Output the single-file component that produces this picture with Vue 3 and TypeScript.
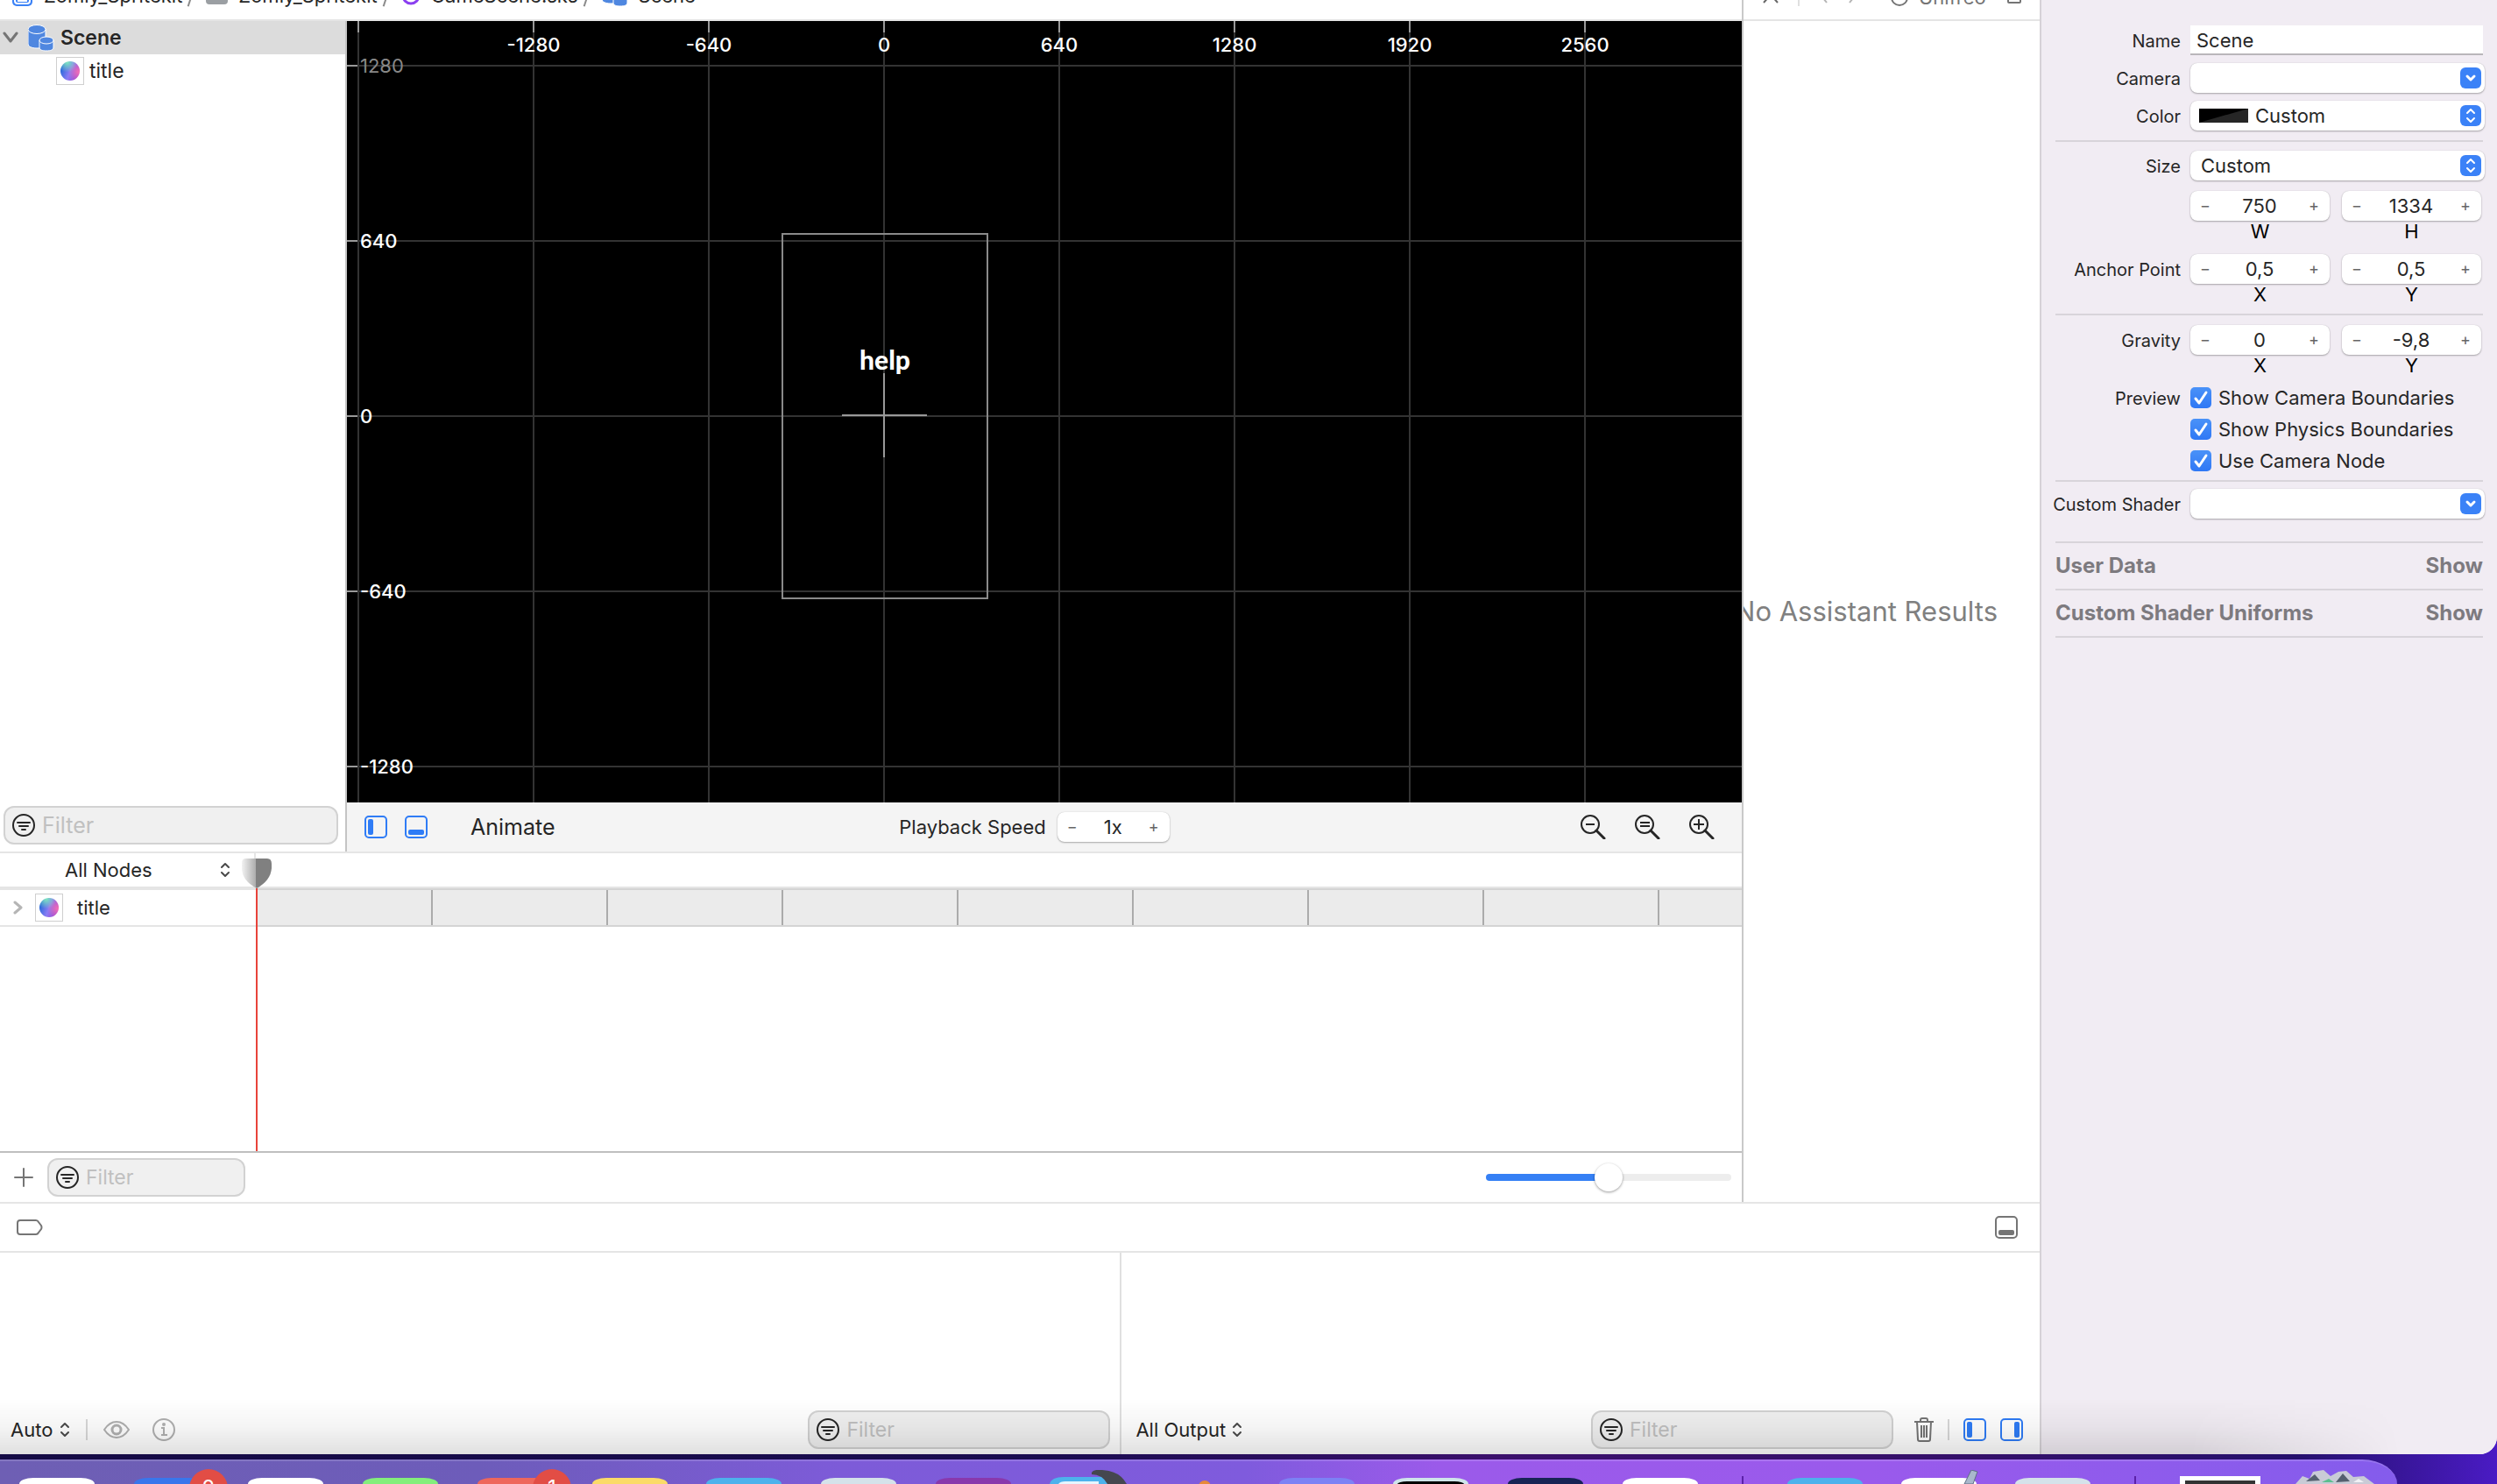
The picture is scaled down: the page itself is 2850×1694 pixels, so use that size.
<script setup lang="ts">
import { computed, ref } from 'vue'

interface Mark {
  label: string
  at: number
}

const columns: Mark[] = [
  { label: '', at: 13 },
  { label: '-1280', at: 213 },
  { label: '-640', at: 413 },
  { label: '0', at: 613 },
  { label: '640', at: 813 },
  { label: '1280', at: 1013 },
  { label: '1920', at: 1213 },
  { label: '2560', at: 1413 },
]

const rows: Mark[] = [
  { label: '1280', at: 51 },
  { label: '640', at: 251 },
  { label: '0', at: 451 },
  { label: '-640', at: 651 },
  { label: '-1280', at: 851 },
]

const previews = ref([
  { id: 'camera-bounds', label: 'Show Camera Boundaries', on: true },
  { id: 'physics-bounds', label: 'Show Physics Boundaries', on: true },
  { id: 'camera-node', label: 'Use Camera Node', on: true },
])

const sections = ['User Data', 'Custom Shader Uniforms']

const name = ref('Scene')
const width = ref('750')
const height = ref('1334')
const anchorX = ref('0,5')
const anchorY = ref('0,5')
const gravityX = ref('0')
const gravityY = ref('-9,8')
const speed = ref('1x')
const scale = ref(50)
const scaleFill = computed(() => ({ '--fill': `${scale.value}%` }))

const apps = ['white', 'blue badge', 'white', 'green', 'red badge', 'yellow', 'sky', 'mist', 'plum', 'watch', 'dot', 'iris', 'screen', 'navy', 'white']
</script>

<template>
  <div class="desktop">
    <div class="window">
      <div class="main">
        <div class="upper">
          <div class="editor">
            <nav class="path" aria-label="Path">
              <svg class="crumb-icon" width="25" height="24" viewBox="0 0 25 24"><rect x="1" y="1" width="23" height="22" rx="5" fill="#3b82f6" /><rect x="4" y="4" width="17" height="16" rx="3" fill="none" stroke="#fff" stroke-width="2" /><path d="M7 17h11" stroke="#fff" stroke-width="2" /></svg>
              <a href="#" class="crumb">Zomly_Spritekit</a>
              <span class="slash"></span>
              <svg class="crumb-icon folder" width="25" height="24" viewBox="0 0 25 24"><path d="M0 4h25v13q0 4-4 4H4q-4 0-4-4z" fill="#9b9fa3" /></svg>
              <a href="#" class="crumb">Zomly_Spritekit</a>
              <span class="slash"></span>
              <svg class="crumb-icon ring" width="22" height="24" viewBox="0 0 22 24"><circle cx="11" cy="11" r="9" fill="none" stroke="#8b3ff0" stroke-width="3" /></svg>
              <a href="#" class="crumb">GameScene.sks</a>
              <span class="slash"></span>
              <svg class="crumb-icon" width="30" height="31" viewBox="0 0 30 31"><use href="#cylinders" /></svg>
              <a href="#" class="crumb">Scene</a>
            </nav>
            <div class="stage">
              <aside class="outline">
                <div class="node scene-node">
                  <svg width="18" height="14" viewBox="0 0 18 14"><path d="M2 2l7 9 7-9" fill="none" stroke="#757575" stroke-width="3" stroke-linecap="round" stroke-linejoin="round" /></svg>
                  <svg width="30" height="31" viewBox="0 0 30 31">
                    <g id="cylinders" fill="#4f87e0" stroke="#fff" stroke-width="1">
                      <path d="M0 5v17c0 3 4 5 10 5s10-2 10-5V5z" /><ellipse cx="10" cy="5.500" rx="10" ry="5" />
                      <path d="M13 18v8c0 3 3 4 8 4s8-1 8-4v-8z" /><ellipse cx="21" cy="18" rx="8" ry="4" />
                    </g>
                  </svg>
                  <span class="node-name strong">Scene</span>
                </div>
                <div class="node title-node">
                  <span class="thumb"><span class="orb"></span></span>
                  <span class="node-name">title</span>
                </div>
                <label class="filter outline-filter">
                  <svg class="filter-icon" width="26" height="26" viewBox="0 0 26 26"><g id="lines" fill="none" stroke="#262626" stroke-width="2"><circle cx="13" cy="13" r="12" /><path d="M6 10h14M8 14h10M11 18h4" stroke-linecap="round" /></g></svg>
                  <input type="text" placeholder="Filter" aria-label="Filter nodes" />
                </label>
              </aside>
              <section class="view">
                <div class="canvas">
                  <svg class="grid" width="100%" height="100%">
                    <g stroke="#333" stroke-width="2">
                      <line v-for="c in columns" :key="c.at" :x1="c.at" :x2="c.at" y1="0" y2="100%" />
                      <line v-for="r in rows" :key="r.at" :y1="r.at" :y2="r.at" x1="0" x2="100%" />
                    </g>
                    <g stroke="#999" stroke-width="2">
                      <line v-for="c in columns" :key="c.at" :x1="c.at" :x2="c.at" y1="0" y2="13" />
                      <line v-for="r in rows" :key="r.at" :y1="r.at" :y2="r.at" x1="0" x2="12" />
                    </g>
                    <g fill="none" stroke="#8a8a8a" stroke-width="2">
                      <rect x="497" y="243" width="234" height="416" />
                      <path d="M565 450h97M613 402v96" stroke="#999" />
                    </g>
                    <g class="marks">
                      <text v-for="c in columns" :key="c.at" :x="c.at" y="35" text-anchor="middle">{{ c.label }}</text>
                      <text v-for="(r, i) in rows" :key="r.at" x="15" :y="r.at + 8" :class="{ dim: i === 0 }">{{ r.label }}</text>
                    </g>
                    <text class="help" x="614" y="398" text-anchor="middle">help</text>
                  </svg>
                </div>
                <div class="toolbar">
                  <div class="tools">
                    <button aria-label="Toggle outline"><svg width="26" height="26" viewBox="0 0 26 26"><rect x="1" y="1" width="24" height="24" rx="4" fill="none" stroke="#2f7cf6" stroke-width="2" /><rect x="4" y="4" width="6" height="18" rx="2" fill="#2f7cf6" /></svg></button>
                    <button aria-label="Toggle timeline"><svg width="26" height="26" viewBox="0 0 26 26"><rect x="1" y="1" width="24" height="24" rx="4" fill="none" stroke="#2f7cf6" stroke-width="2" /><rect x="4" y="16" width="18" height="6" rx="2" fill="#2f7cf6" /></svg></button>
                    <button class="animate">Animate</button>
                  </div>
                  <div class="playback">
                    <label for="speed">Playback Speed</label>
                    <div class="stepper speed"><button aria-label="Slower">−</button><input id="speed" v-model="speed" type="text" /><button aria-label="Faster">+</button></div>
                  </div>
                  <div class="zooms">
                    <button aria-label="Zoom out"><svg width="29" height="28" viewBox="0 0 29 28"><g fill="none" stroke="#262626" stroke-width="2"><circle cx="11" cy="11" r="10" /><path d="M6 11h10" /><path d="M18 18l9 9" stroke-width="3" stroke-linecap="round" /></g></svg></button>
                    <button aria-label="Actual size"><svg width="29" height="28" viewBox="0 0 29 28"><g fill="none" stroke="#262626" stroke-width="2"><circle cx="11" cy="11" r="10" /><path d="M6 9h11M6 13h11" /><path d="M18 18l9 9" stroke-width="3" stroke-linecap="round" /></g></svg></button>
                    <button aria-label="Zoom in"><svg width="29" height="28" viewBox="0 0 29 28"><g fill="none" stroke="#262626" stroke-width="2"><circle cx="11" cy="11" r="10" /><path d="M5 11h12M11 5v12" /><path d="M18 18l9 9" stroke-width="3" stroke-linecap="round" /></g></svg></button>
                  </div>
                </div>
              </section>
            </div>
            <section class="timeline">
              <div class="timeline-head">
                <div class="pick nodes">
                  <select aria-label="Nodes"><option>All Nodes</option></select>
                  <svg width="12" height="18" viewBox="0 0 12 18"><path id="updown" d="M2 6l4-4 4 4M2 12l4 4 4-4" fill="none" stroke="#4a4a4a" stroke-width="2" stroke-linecap="round" stroke-linejoin="round" /></svg>
                </div>
              </div>
              <div class="track-row">
                <div class="track-name">
                  <svg width="11" height="16" viewBox="0 0 11 16"><path d="M2 2l7 6-7 6" fill="none" stroke="#b5b5b5" stroke-width="3" stroke-linecap="round" stroke-linejoin="round" /></svg>
                  <span class="thumb"><span class="orb"></span></span>
                  <span>title</span>
                </div>
                <div class="track"></div>
              </div>
              <div class="playhead">
                <svg width="34" height="34" viewBox="0 0 34 34"><defs><linearGradient id="fade"><stop offset="0" stop-color="#f2f2f2" /><stop offset="1" stop-color="#a8a8a8" /></linearGradient></defs><path d="M17 0H5Q0 0 0 5v6q0 14 17 23z" fill="url(#fade)" /><path d="M16 0h13q5 0 5 6v5q-1 14-17 23l-1-1z" fill="#808080" /></svg>
              </div>
            </section>
            <div class="timeline-foot">
              <button aria-label="Add"><svg width="22" height="22" viewBox="0 0 22 22"><path d="M11 1v20M1 11h20" stroke="#757575" stroke-width="2" stroke-linecap="round" /></svg></button>
              <label class="filter small">
                <svg class="filter-icon" width="26" height="26" viewBox="0 0 26 26"><use href="#lines" /></svg>
                <input type="text" placeholder="Filter" aria-label="Filter timeline" />
              </label>
              <input v-model.number="scale" class="scale" type="range" min="0" max="100" aria-label="Timeline scale" :style="scaleFill" />
            </div>
          </div>
          <section class="assistant">
            <div class="assistant-bar">
              <svg width="18" height="20" viewBox="0 0 18 20"><path d="M1 1l16 18M17 1L1 19" stroke="#666" stroke-width="2" /></svg>
              <span class="bar-rule"></span>
              <svg class="chev" width="10" height="22" viewBox="0 0 10 22"><path d="M9 1L1 11l8 10" fill="none" stroke="#b5b5b5" stroke-width="2" /></svg>
              <svg class="chev" width="10" height="22" viewBox="0 0 10 22"><path d="M1 1l8 10-8 10" fill="none" stroke="#b5b5b5" stroke-width="2" /></svg>
              <svg class="dial" width="20" height="22" viewBox="0 0 20 22"><circle cx="10" cy="11" r="9" fill="none" stroke="#757575" stroke-width="2" /></svg>
              <span class="callers">Unifreo</span>
              <svg width="16" height="22" viewBox="0 0 16 22"><rect x="1" y="1" width="14" height="20" rx="1" fill="none" stroke="#757575" stroke-width="2" /></svg>
            </div>
            <p class="empty">No Assistant Results</p>
          </section>
        </div>
        <div class="debug-bar">
          <button aria-label="Breakpoints"><svg width="30" height="18" viewBox="0 0 30 18"><path d="M4 1h18q2 0 3 2l3 4q1 2 0 4l-3 4q-1 2-3 2H4q-3 0-3-3V4q0-3 3-3z" fill="none" stroke="#757575" stroke-width="2" /></svg></button>
          <button aria-label="Toggle debug area"><svg width="26" height="26" viewBox="0 0 26 26"><rect x="1" y="1" width="24" height="24" rx="4" fill="none" stroke="#757575" stroke-width="2" /><rect x="4" y="16" width="18" height="6" rx="2" fill="#757575" /></svg></button>
        </div>
        <div class="debug">
          <section class="variables">
            <div class="pick"><select aria-label="Scope"><option>Auto</option></select><svg width="12" height="18" viewBox="0 0 12 18"><use href="#updown" /></svg></div>
            <span class="rule"></span>
            <button class="eye" aria-label="Quick look"><svg width="30" height="20" viewBox="0 0 30 20"><path d="M1 10Q7 1 15 1t14 9q-6 9-14 9T1 10z" fill="none" stroke="#b0b0b0" stroke-width="2" /><circle cx="15" cy="10" r="5" fill="none" stroke="#b0b0b0" stroke-width="3" /></svg></button>
            <button aria-label="Info"><svg width="26" height="26" viewBox="0 0 26 26"><circle cx="13" cy="13" r="12" fill="none" stroke="#b0b0b0" stroke-width="2" /><circle cx="13" cy="7" r="2" fill="#b0b0b0" /><path d="M10 11h3v8M10 19h7" fill="none" stroke="#b0b0b0" stroke-width="2" /></svg></button>
            <label class="filter small wide">
              <svg class="filter-icon" width="26" height="26" viewBox="0 0 26 26"><use href="#lines" /></svg>
              <input type="text" placeholder="Filter" aria-label="Filter variables" />
            </label>
          </section>
          <section class="console">
            <div class="pick"><select aria-label="Output"><option>All Output</option></select><svg width="12" height="18" viewBox="0 0 12 18"><use href="#updown" /></svg></div>
            <label class="filter small wide">
              <svg class="filter-icon" width="26" height="26" viewBox="0 0 26 26"><use href="#lines" /></svg>
              <input type="text" placeholder="Filter" aria-label="Filter output" />
            </label>
            <button class="trash" aria-label="Clear"><svg width="22" height="28" viewBox="0 0 22 28"><g fill="none" stroke="#757575" stroke-width="2"><path d="M0 5h22M7 5V3q0-2 2-2h4q2 0 2 2v2M3 5l1 20q0 2 2 2h10q2 0 2-2l1-20M8 9v14M11 9v14M14 9v14" /></g></svg></button>
            <span class="rule"></span>
            <button class="pane" aria-label="Show variables"><svg width="26" height="26" viewBox="0 0 26 26"><rect x="1" y="1" width="24" height="24" rx="4" fill="none" stroke="#2f7cf6" stroke-width="2" /><rect x="4" y="4" width="6" height="18" rx="2" fill="#2f7cf6" /></svg></button>
            <button aria-label="Show console"><svg width="26" height="26" viewBox="0 0 26 26"><rect x="1" y="1" width="24" height="24" rx="4" fill="none" stroke="#2f7cf6" stroke-width="2" /><rect x="16" y="4" width="6" height="18" rx="2" fill="#2f7cf6" /></svg></button>
          </section>
        </div>
      </div>

      <aside class="inspector">
        <div class="field">
          <label for="name">Name</label>
          <input id="name" v-model="name" class="text" type="text" />
        </div>
        <div class="field">
          <label for="camera">Camera</label>
          <div class="popup">
            <select id="camera"><option></option></select>
            <svg class="knob" width="24" height="24" viewBox="0 0 24 24"><g id="down"><rect width="24" height="24" rx="6" fill="#3b82f7" /><path d="M8 10l4 4 4-4" fill="none" stroke="#fff" stroke-width="3" stroke-linecap="round" stroke-linejoin="round" /></g></svg>
          </div>
        </div>
        <div class="field">
          <label for="color">Color</label>
          <div class="popup swatched">
            <svg class="swatch" width="56" height="16" viewBox="0 0 56 16"><rect width="56" height="16" /><path d="M56 0v16H0z" fill="#262626" /></svg>
            <select id="color"><option>Custom</option></select>
            <svg class="knob" width="24" height="24" viewBox="0 0 24 24"><g id="both"><rect width="24" height="24" rx="6" fill="#3b82f7" /><path d="M8 9l4-4 4 4M8 15l4 4 4-4" fill="none" stroke="#fff" stroke-width="2" stroke-linecap="round" stroke-linejoin="round" /></g></svg>
          </div>
        </div>
        <hr class="after-color" />
        <div class="field size">
          <label for="size">Size</label>
          <div class="popup">
            <select id="size"><option>Custom</option></select>
            <svg class="knob" width="24" height="24" viewBox="0 0 24 24"><use href="#both" /></svg>
          </div>
        </div>
        <div class="field dims">
          <span></span>
          <div class="pair">
            <div class="stepper"><button aria-label="Less width">−</button><input id="w" v-model="width" type="text" /><button aria-label="More width">+</button></div>
            <div class="stepper"><button aria-label="Less height">−</button><input id="h" v-model="height" type="text" /><button aria-label="More height">+</button></div>
            <label for="w">W</label><label for="h">H</label>
          </div>
        </div>
        <div class="field anchor">
          <span class="caption">Anchor Point</span>
          <div class="pair">
            <div class="stepper"><button aria-label="Less anchor X">−</button><input id="ax" v-model="anchorX" type="text" /><button aria-label="More anchor X">+</button></div>
            <div class="stepper"><button aria-label="Less anchor Y">−</button><input id="ay" v-model="anchorY" type="text" /><button aria-label="More anchor Y">+</button></div>
            <label for="ax">X</label><label for="ay">Y</label>
          </div>
        </div>
        <hr class="after-anchor" />
        <div class="field gravity">
          <span class="caption">Gravity</span>
          <div class="pair">
            <div class="stepper"><button aria-label="Less gravity X">−</button><input id="gx" v-model="gravityX" type="text" /><button aria-label="More gravity X">+</button></div>
            <div class="stepper"><button aria-label="Less gravity Y">−</button><input id="gy" v-model="gravityY" type="text" /><button aria-label="More gravity Y">+</button></div>
            <label for="gx">X</label><label for="gy">Y</label>
          </div>
        </div>
        <div class="field preview">
          <span class="caption">Preview</span>
          <div class="checks">
            <div v-for="p in previews" :key="p.id" class="check">
              <span class="box">
                <input :id="p.id" v-model="p.on" type="checkbox" />
                <svg v-if="p.on" width="24" height="24" viewBox="0 0 24 24"><path d="M6 13l4 5 8-12" fill="none" stroke="#fff" stroke-width="3" stroke-linecap="round" stroke-linejoin="round" /></svg>
              </span>
              <label :for="p.id">{{ p.label }}</label>
            </div>
          </div>
        </div>
        <hr class="after-preview" />
        <div class="field shader">
          <label for="shader">Custom Shader</label>
          <div class="popup">
            <select id="shader"><option></option></select>
            <svg class="knob" width="24" height="24" viewBox="0 0 24 24"><use href="#down" /></svg>
          </div>
        </div>
        <div class="sections">
          <div v-for="s in sections" :key="s" class="section"><span>{{ s }}</span><button>Show</button></div>
        </div>
      </aside>
      <div class="shade"></div>
    </div>

    <footer class="dock">
      <div class="apps">
        <span v-for="(a, i) in apps" :key="i" class="app" :class="a">
          <span v-if="a === 'blue badge'" class="count">2</span>
          <span v-if="a === 'red badge'" class="count">1</span>
          <svg v-if="a === 'watch'" width="90" height="16" viewBox="0 0 90 16"><path d="M0 16Q2 8 16 8h44q12 0 14 8z" fill="#4db2ec" /><path d="M10 16q2-3 8-3h38v3z" fill="#e6f6ff" /><path d="M48 3q2-4 12-3 20 1 28 16H66Q60 5 48 5z" fill="#45474f" /></svg>
          <svg v-if="a === 'dot'" width="86" height="8" viewBox="0 0 86 8"><circle cx="46" cy="11" r="7" fill="#e88a3a" /></svg>
        </span>
      </div>
      <span class="dock-rule"></span>
      <div class="apps recent">
        <span class="app sky"></span>
        <span class="app white"><svg width="96" height="16" viewBox="0 0 96 16"><path d="M72 16l8-16 7 2-5 14z" fill="#a9b8cc" stroke="#5d6d85" /></svg></span>
        <span class="app mist"></span>
      </div>
      <span class="dock-rule"></span>
      <span class="shot"></span>
      <svg class="trashcan" width="90" height="16" viewBox="0 0 90 16"><path d="M0 16l8-9 8 3 4-8 12-2 8 7 9-5 9-1 8 7 12-1 12 9z" fill="#c9cbd6" /><path d="M12 13l10-8 6 7zM46 14l8-10 8 9z" fill="#55606f" /><path d="M30 14l8-4 6 4z" fill="#5bbf8f" /><path d="M66 14l6-4 6 4z" fill="#f1f1f5" /></svg>
    </footer>
  </div>
</template>

<style>
body {
  margin: 0;
}
</style>

<style scoped>
.desktop {
  display: flex;
  flex-direction: column;
  height: 100vh;
  overflow: hidden;
  background: linear-gradient(to right, #150b45 0, #1a0c50 42%, #3b106c 60%, #35106a 78%, #25106c 92%, #4a1bc4 100%);
  color: #262626;
  font: 22px/26px Inter, sans-serif;
}
button,
input,
select {
  margin: 0;
  padding: 0;
  border: 0;
  outline: 0;
  background: none;
  color: inherit;
  font: inherit;
  appearance: none;
}
button {
  display: flex;
  flex: none;
}
svg {
  flex: none;
  display: block;
}
.window {
  position: relative;
  flex: 1;
  min-height: 0;
  display: flex;
  background: #fff;
  border-bottom-right-radius: 20px;
  overflow: hidden;
}
.main {
  flex: 1;
  min-width: 0;
  display: flex;
  flex-direction: column;
}
.upper {
  flex: 1;
  min-height: 0;
  display: flex;
}
.editor {
  flex: 1;
  min-width: 0;
  display: flex;
  flex-direction: column;
}
.path,
.assistant-bar {
  display: flex;
  align-items: flex-end;
  height: 22px;
  flex: none;
  overflow: hidden;
  border-bottom: 2px solid #e5e5e5;
}
.path {
  padding-left: 13px;
}
.path > * {
  flex: none;
}
.crumb {
  margin: 0 5px 14px 12px;
  color: #262626;
  text-decoration: none;
}
.crumb-icon {
  margin-bottom: 14px;
}
.slash {
  width: 2px;
  height: 28px;
  margin: 0 15px 14px 5px;
  background: #8a8a8a;
  transform: rotate(18deg);
}
.stage {
  flex: 1;
  min-height: 0;
  display: flex;
  border-bottom: 2px solid #e5e5e5;
}
.outline {
  width: 394px;
  flex: none;
  display: flex;
  flex-direction: column;
  border-right: 2px solid #c4c4c4;
}
.node {
  display: flex;
  align-items: center;
  height: 38px;
  font-size: 23px;
}
.scene-node {
  gap: 7px;
  padding-left: 3px;
  background: #dcdcdc;
}
.scene-node svg + svg {
  margin-left: 4px;
}
.strong {
  font-weight: 600;
}
.title-node {
  gap: 6px;
  padding-left: 64px;
}
.thumb {
  display: flex;
  align-items: center;
  justify-content: center;
  box-sizing: border-box;
  width: 32px;
  height: 32px;
  border: 1px solid #cfcfcf;
  background: #fff;
}
.orb {
  width: 22px;
  height: 22px;
  border-radius: 50%;
  background: radial-gradient(circle at 35% 5%, #7fe8c0 0, rgba(127, 232, 192, 0) 45%), radial-gradient(circle at 95% 55%, #f26fb5 0, rgba(242, 111, 181, 0) 50%), linear-gradient(110deg, #2f6bdc 15%, #8a7cf4 50%, #a03fd0 90%);
}
.filter {
  display: flex;
  align-items: center;
  box-sizing: border-box;
  height: 44px;
  gap: 8px;
  padding: 0 8px;
  border: 2px solid #d2d2d2;
  border-radius: 12px;
  background: #f0f0f0;
  font-size: 25px;
}
.filter input {
  flex: 1;
  min-width: 0;
}
.filter input::placeholder {
  color: #c0c0c0;
  opacity: 1;
}
.small {
  font-size: 23px;
}
.outline-filter {
  margin: auto 8px 8px 4px;
}
.view {
  flex: 1;
  min-width: 0;
  display: flex;
  flex-direction: column;
}
.canvas {
  flex: 1;
  min-height: 0;
  overflow: hidden;
  background: #000;
}
.marks {
  fill: #fff;
  font-size: 22px;
  font-weight: 500;
}
.marks .dim {
  fill: #888;
  font-weight: 400;
}
.help {
  fill: #fff;
  font: 900 30px Lato, sans-serif;
}
.toolbar {
  display: grid;
  grid-template-columns: 1fr auto 1fr;
  align-items: center;
  height: 56px;
  padding: 0 31px 0 20px;
  background: #f4f4f4;
}
.tools {
  display: flex;
  align-items: center;
  gap: 20px;
}
.animate {
  margin-left: 29px;
  font-size: 25px;
}
.playback {
  display: flex;
  align-items: center;
  gap: 13px;
  margin-right: 12px;
}
.zooms {
  display: flex;
  justify-content: flex-end;
  gap: 33px;
}
.stepper {
  display: flex;
  align-items: center;
  box-sizing: border-box;
  height: 34px;
  padding: 0 11px 0 10px;
  border-radius: 8px;
  background: #fff;
  box-shadow: 0 1px 2px rgba(0, 0, 0, 0.3), 0 0 1px rgba(0, 0, 0, 0.2);
}
.stepper input {
  flex: 1;
  min-width: 0;
  width: 0;
  text-align: center;
}
.stepper button {
  width: 14px;
  justify-content: center;
  color: #666;
  font-size: 18px;
}
.speed {
  width: 128px;
}
.timeline {
  position: relative;
  height: 340px;
  flex: none;
  display: flex;
  flex-direction: column;
  border-bottom: 2px solid #bfbfbf;
}
.timeline-head {
  display: flex;
  height: 40px;
  box-sizing: border-box;
  border-bottom: 2px solid #e5e5e5;
}
.pick {
  display: flex;
  align-items: center;
  gap: 7px;
}
.nodes {
  width: 189px;
  padding: 0 27px 0 74px;
  justify-content: space-between;
  border-right: 2px solid #e5e5e5;
}
.track-row {
  display: flex;
  height: 44px;
}
.track-name {
  display: flex;
  align-items: center;
  box-sizing: border-box;
  width: 292px;
  padding-left: 15px;
  border: solid #e5e5e5;
  border-width: 2px 0;
}
.track-name .thumb {
  margin: 0 16px 0 14px;
}
.track {
  flex: 1;
  border: solid #d4d4d4;
  border-width: 2px 0;
  background: linear-gradient(to right, #ebebeb 198px, #ababab 198px) 2px 0 / 200px 100%;
}
.playhead {
  position: absolute;
  left: 292px;
  top: 40px;
  bottom: 0;
  width: 2px;
  background: #e8433a;
}
.playhead svg {
  position: absolute;
  left: -16px;
  bottom: 100%;
}
.timeline-foot {
  display: flex;
  align-items: center;
  height: 56px;
  flex: none;
  padding: 0 12px 0 16px;
}
.timeline-foot .filter {
  width: 226px;
  margin-left: 16px;
}
.scale {
  width: 280px;
  height: 34px;
  margin-left: auto;
}
.scale::-webkit-slider-runnable-track {
  height: 8px;
  border-radius: 4px;
  background: linear-gradient(to right, #3580f5 var(--fill), #ededed var(--fill));
}
.scale::-webkit-slider-thumb {
  appearance: none;
  width: 32px;
  height: 32px;
  margin-top: -12px;
  border-radius: 50%;
  background: #fff;
  box-shadow: 0 1px 3px rgba(0, 0, 0, 0.4);
}
.assistant {
  width: 338px;
  flex: none;
  display: flex;
  flex-direction: column;
  overflow: hidden;
  border-left: 2px solid #c9c9c9;
}
.assistant-bar {
  padding-left: 22px;
}
.assistant-bar > * {
  margin-bottom: 18px;
}
.bar-rule {
  width: 2px;
  height: 24px;
  margin: 0 22px 15px 22px;
  background: #e0e0e0;
}
.chev {
  margin-right: 24px;
}
.dial {
  margin: 0 12px 14px 14px;
}
.callers {
  margin-right: 24px;
  color: #757575;
}
.assistant-bar .callers {
  margin-bottom: 12px;
}
.empty {
  display: flex;
  flex: 1;
  align-items: center;
  justify-content: flex-end;
  margin: 0;
  padding: 0 48px 0 0;
  color: #808080;
  font-size: 31px;
  white-space: nowrap;
}
.debug-bar {
  display: flex;
  align-items: center;
  justify-content: space-between;
  height: 54px;
  flex: none;
  padding: 0 25px 0 19px;
  border: solid #e5e5e5;
  border-width: 2px 0;
}
.debug {
  display: flex;
  height: 230px;
  flex: none;
}
.variables,
.console {
  display: flex;
  align-items: center;
  box-sizing: border-box;
  height: 100%;
  padding-top: 174px;
}
.variables {
  width: 55%;
  padding-left: 12px;
  padding-right: 11px;
  border-right: 2px solid #e0e0e0;
}
.console {
  flex: 1;
  padding-left: 16px;
  padding-right: 19px;
}
.rule {
  width: 2px;
  height: 24px;
  margin: 0 18px;
  background: #d8d8d8;
}
.console .rule {
  margin: 0 16px;
}
.eye {
  margin-right: 26px;
}
.wide {
  width: 345px;
  margin-left: auto;
}
.trash {
  margin-left: 24px;
}
.pane {
  margin-right: 16px;
}
.inspector {
  width: 488px;
  flex: none;
  padding: 29px 16px 0;
  border-left: 2px solid #d6d2d7;
  background: #f1ecf3;
}
.field {
  display: grid;
  grid-template-columns: 143px minmax(0, 1fr);
  column-gap: 11px;
  margin-bottom: 9px;
}
.field > label,
.caption {
  display: flex;
  align-items: center;
  justify-content: flex-end;
  box-sizing: border-box;
  height: 34px;
  padding-top: 2px;
  font-size: 20px;
  white-space: nowrap;
}
.text {
  box-sizing: border-box;
  width: 100%;
  height: 34px;
  padding: 2px 7px 0;
  border-bottom: 2px solid #b9b6ba;
  background: #fff;
}
.popup {
  display: flex;
  align-items: center;
  height: 34px;
  margin-right: -2px;
  padding: 0 4px 0 12px;
  border-radius: 8px;
  background: #fff;
  box-shadow: 0 1px 2px rgba(0, 0, 0, 0.3), 0 0 1px rgba(0, 0, 0, 0.2);
}
.swatched {
  padding-left: 10px;
}
.popup select {
  flex: 1;
  min-width: 0;
}
.knob {
  pointer-events: none;
}
.swatch {
  margin-right: 8px;
}
.pair {
  display: grid;
  grid-template-columns: 1fr 1fr;
  column-gap: 14px;
  margin-right: 2px;
}
.pair label {
  height: 24px;
  color: #000;
  line-height: 24px;
  text-align: center;
}
hr {
  width: 100%;
  height: 2px;
  margin: 0;
  border: 0;
  background: #d8d4da;
}
.after-color {
  margin: 11px 0 10px;
}
.size {
  margin-bottom: 12px;
}
.dims {
  margin-bottom: 14px;
}
.anchor {
  margin-bottom: 10px;
}
.after-anchor {
  margin-bottom: 11px;
}
.gravity {
  margin-bottom: 13px;
}
.preview {
  margin-bottom: 10px;
}
.preview .caption {
  height: 24px;
}
.checks {
  display: flex;
  flex-direction: column;
  gap: 12px;
}
.check {
  display: flex;
  align-items: center;
  gap: 8px;
  height: 24px;
}
.box {
  display: grid;
}
.box > * {
  grid-area: 1 / 1;
  width: 24px;
  height: 24px;
}
.box input {
  border-radius: 5px;
  background: #fff;
}
.box input:checked {
  background: linear-gradient(#4a92f8, #2f78f5);
}
.box svg {
  pointer-events: none;
}
.after-preview {
  margin-bottom: 8px;
}
.shader {
  margin-bottom: 26px;
}
.sections {
  border-top: 2px solid #d8d4da;
}
.section {
  display: flex;
  align-items: center;
  justify-content: space-between;
  height: 52px;
  border-bottom: 2px solid #d8d4da;
  color: #7d7a7f;
  font-size: 24px;
  font-weight: 700;
}
.shade {
  position: absolute;
  left: 0;
  right: 110px;
  bottom: 0;
  height: 64px;
  pointer-events: none;
  background: linear-gradient(rgba(0, 0, 0, 0), rgba(0, 0, 0, 0.04) 50%, rgba(0, 0, 0, 0.12));
  mask-image: linear-gradient(to left, transparent, #000 240px);
}
.dock {
  display: flex;
  align-items: flex-end;
  box-sizing: border-box;
  height: 28px;
  flex: none;
  margin: 6px 114px 0 0;
  padding: 0 26px 0 22px;
  border-top: 2px solid rgba(255, 255, 255, 0.15);
  border-top-right-radius: 40px 28px;
  background: linear-gradient(to right, #6e5fb4 0, #6d5cba 20%, #7d5bd8 35%, #7f5bdd 52%, #9b5aea 60%, #9a5aec 78%, #845cec 100%);
}
.apps {
  display: flex;
  justify-content: space-between;
  flex: 1;
}
.app {
  position: relative;
  width: 86px;
  height: 7px;
  border-radius: 16px 16px 0 0 / 7px 7px 0 0;
}
.app > svg {
  position: absolute;
  bottom: 0;
  left: 0;
}
.white { background: #fff; }
.blue { background: #3976ec; }
.green { background: #83ee7c; }
.red { background: #ee675c; }
.yellow { background: #fbdb68; }
.sky { background: #4db2ec; }
.mist { background: #d5e2ea; }
.plum { background: #8938ac; }
.iris { background: #7c82f5; }
.navy { background: #172455; }
.screen {
  box-sizing: border-box;
  border: solid #cfe5ea;
  border-width: 4px 5px 0;
  background: #000;
}
.count {
  position: absolute;
  right: -21px;
  bottom: -27px;
  width: 44px;
  height: 44px;
  border-radius: 50%;
  background: #e24d45;
  color: #fff;
  font-size: 24px;
  line-height: 44px;
  text-align: center;
}
.dock-rule {
  width: 2px;
  height: 9px;
  margin: 0 50px;
  background: #5b21a8;
}
.recent {
  flex: none;
  width: 346px;
}
.shot {
  box-sizing: border-box;
  width: 92px;
  height: 9px;
  border: solid #fff;
  border-width: 5px 6px 0;
  background: #333;
}
.trashcan {
  margin-left: 40px;
}
</style>
